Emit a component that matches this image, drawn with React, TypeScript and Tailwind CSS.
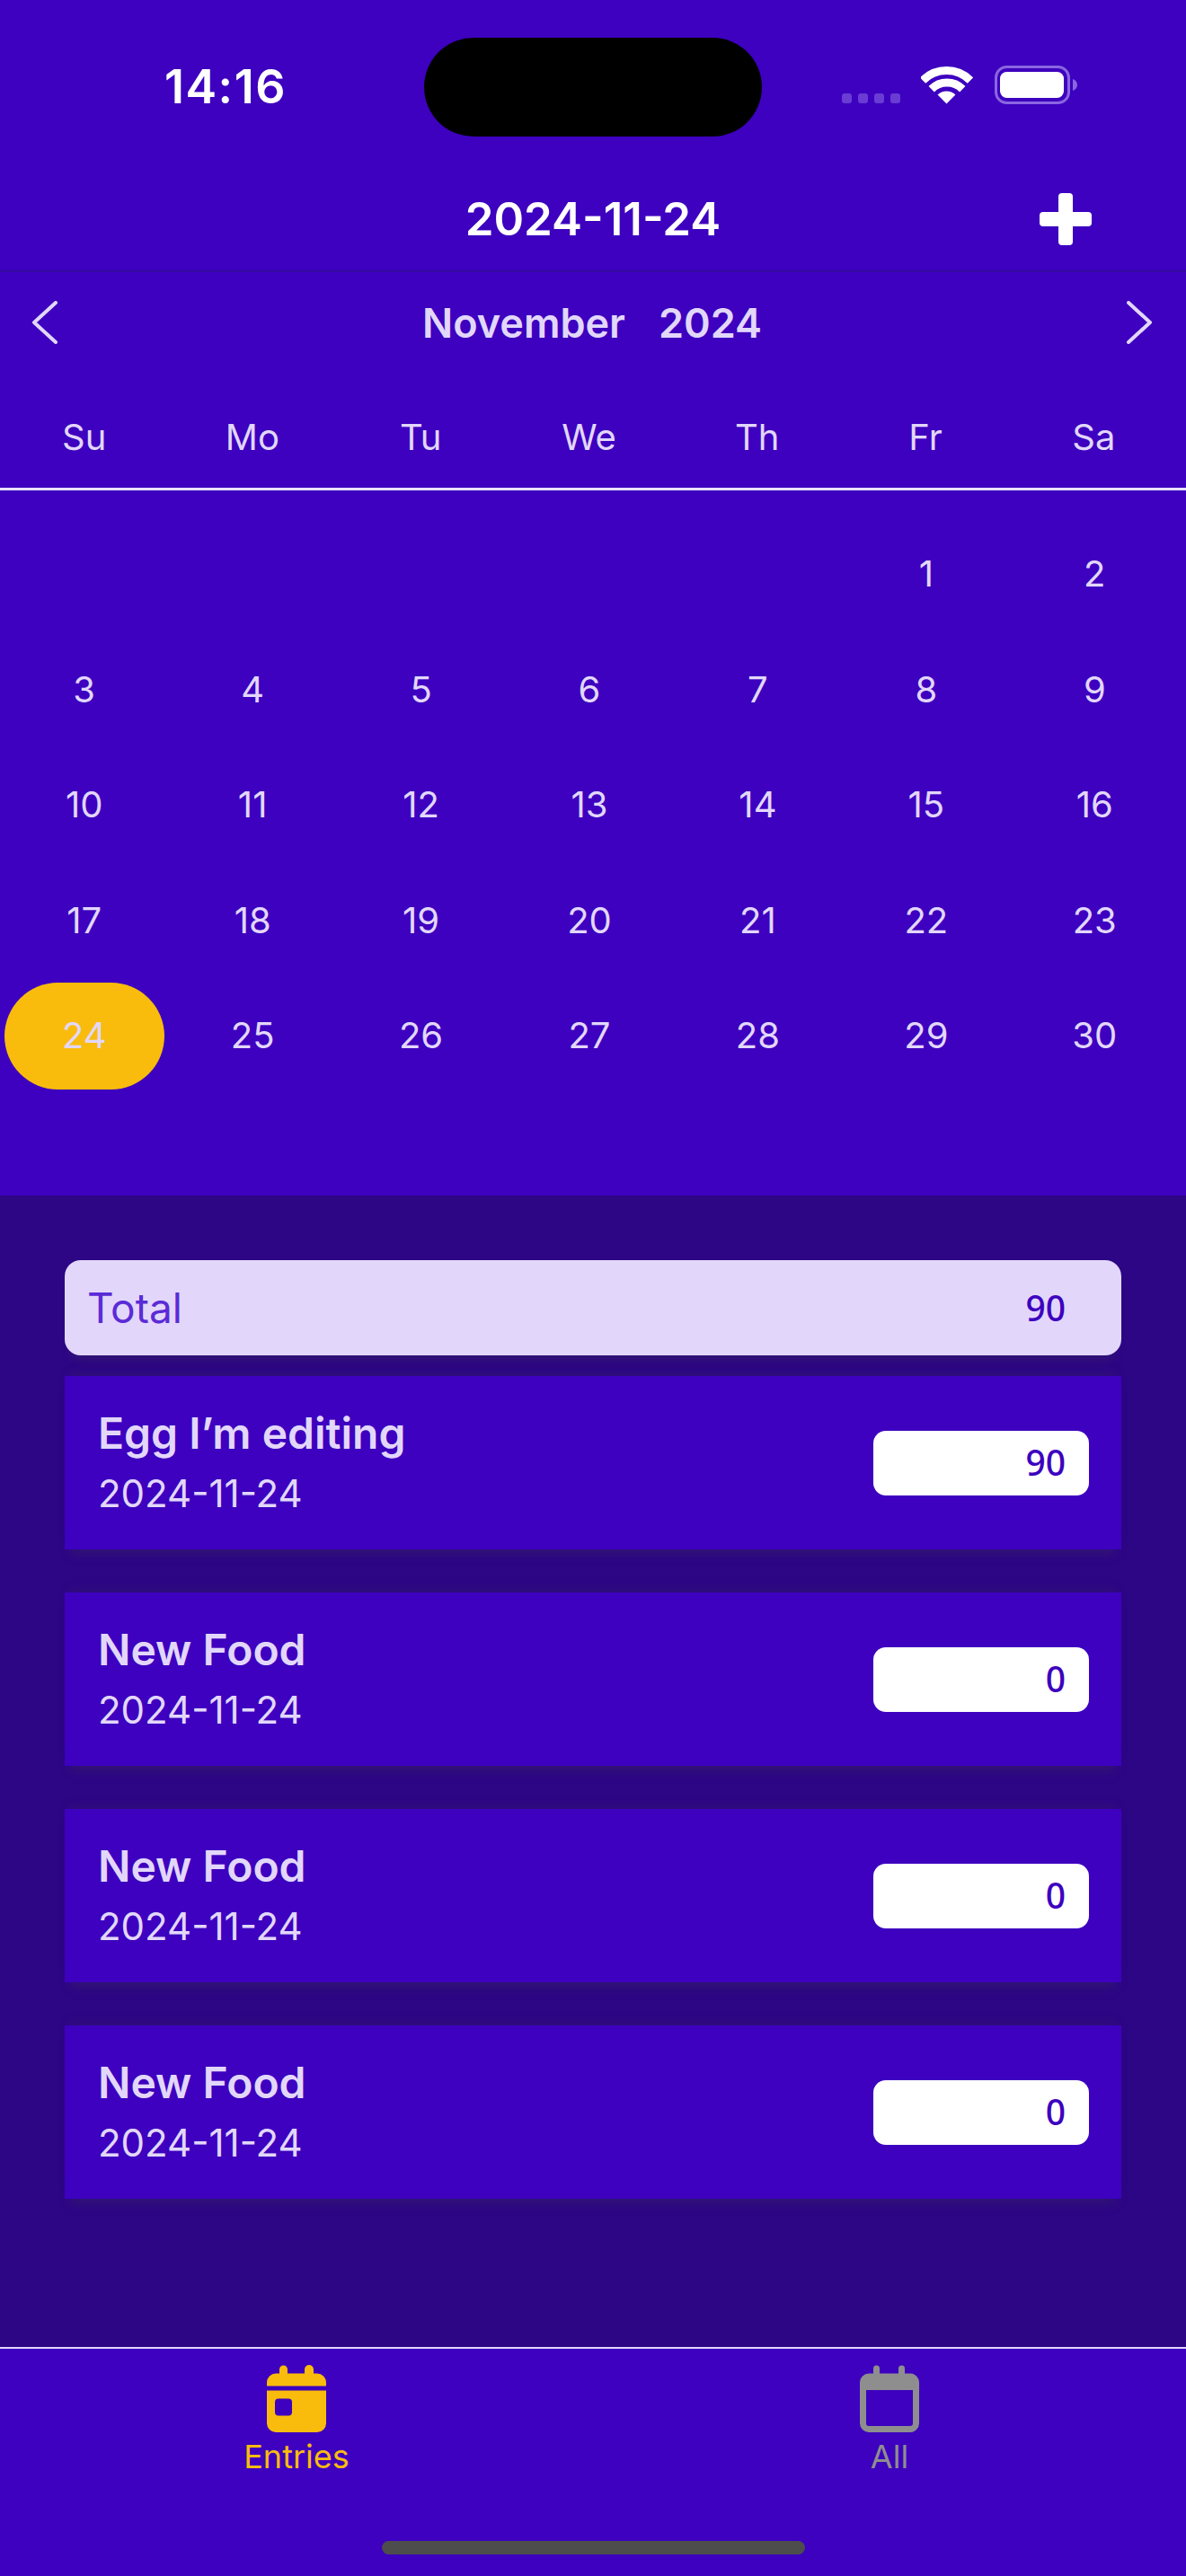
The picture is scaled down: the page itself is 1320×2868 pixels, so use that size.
const weekdays = ["Su", "Mo", "Tu", "We", "Th", "Fr", "Sa"];

const days: (number | null)[] = [
  null, null, null, null, null, 1, 2,
  3, 4, 5, 6, 7, 8, 9,
  10, 11, 12, 13, 14, 15, 16,
  17, 18, 19, 20, 21, 22, 23,
  24, 25, 26, 27, 28, 29, 30,
];

const entries = [
  { name: "Egg I’m editing", date: "2024-11-24", value: "90" },
  { name: "New Food", date: "2024-11-24", value: "0" },
  { name: "New Food", date: "2024-11-24", value: "0" },
  { name: "New Food", date: "2024-11-24", value: "0" },
];

function StatusIcons() {
  return (
    <div className="flex items-end h-[74px] pl-[89px]">
      <div className="flex gap-[7px] pb-px">
        <div className="w-[11px] h-[11px] rounded-[3px] bg-[#6a3cd4]" />
        <div className="w-[11px] h-[11px] rounded-[3px] bg-[#6a3cd4]" />
        <div className="w-[11px] h-[11px] rounded-[3px] bg-[#6a3cd4]" />
        <div className="w-[11px] h-[11px] rounded-[3px] bg-[#6a3cd4]" />
      </div>
      <svg width="58" height="43" viewBox="0 0 58 43" className="ml-[23px]">
        <path d="M2 16.5 A37.5 37.5 0 0 1 55 16.5" fill="none" stroke="#fff" strokeWidth="9" />
        <path d="M11.7 26.2 A24.5 24.5 0 0 1 46.3 26.2" fill="none" stroke="#fff" strokeWidth="9" />
        <path d="M28.5 42.5 L18.6 32.6 A14 14 0 0 1 38.4 32.6 Z" fill="#fff" />
      </svg>
      <svg width="92" height="43" viewBox="0 0 92 43" className="ml-[24px]">
        <rect x="1.5" y="1.5" width="81" height="40" rx="12" fill="none" stroke="#8a66e0" strokeWidth="3" />
        <rect x="6" y="7" width="71" height="29" rx="7.5" fill="#fff" />
        <path d="M87 15 C90 16 92 18.5 92 21.5 C92 24.5 90 27 87 28 Z" fill="#8a66e0" />
      </svg>
    </div>
  );
}

function Header() {
  return (
    <div className="h-[303px] border-b-2 border-[#350a9f] flex flex-col">
      <div className="flex pt-[42px]">
        <div className="w-[472px] pl-[183px] flex items-center h-[110px]">
          <span className="text-[52px] leading-none font-semibold tracking-[1.5px] text-white">14:16</span>
        </div>
        <div className="w-[376px] h-[110px] rounded-full bg-black" />
        <StatusIcons />
      </div>
      <div className="flex-1 relative flex items-center justify-center pt-[34px]">
        <span className="text-[51px] leading-none font-semibold text-white">2024-11-24</span>
        {/* plus button sits over the title row */}
        <svg width="58" height="58" viewBox="0 0 58 58" className="absolute right-[105px] top-[63px]">
          <rect x="21" y="0" width="16" height="58" rx="4" fill="#fff" />
          <rect x="0" y="21" width="58" height="16" rx="4" fill="#fff" />
        </svg>
      </div>
    </div>
  );
}

function Calendar() {
  return (
    <div className="h-[1028px] bg-[#3d01bf]">
      <div className="h-[112px] flex items-center justify-between pl-[35px] pr-[37px] text-[#e2d7fa]">
        <svg width="30" height="48" viewBox="0 0 30 48">
          <path d="M27 2 L3 24 L27 46" fill="none" stroke="#e2d7fa" strokeWidth="4" strokeLinecap="round" strokeLinejoin="round" />
        </svg>
        <div className="flex gap-[37px] text-[45px] leading-none font-semibold">
          <span>November</span>
          <span>2024</span>
        </div>
        <svg width="30" height="48" viewBox="0 0 30 48">
          <path d="M3 2 L27 24 L3 46" fill="none" stroke="#e2d7fa" strokeWidth="4" strokeLinecap="round" strokeLinejoin="round" />
        </svg>
      </div>

      <div className="grid grid-cols-7 pr-[9px] pt-[48px] pb-[32px] border-b-[3px] border-[#e8e0fb]">
        {weekdays.map((d) => (
          <div key={d} className="text-center text-[40px] leading-[48px] text-[#e2d7fa]">
            {d}
          </div>
        ))}
      </div>

      <div className="grid grid-cols-7 auto-rows-[128.5px] pr-[8px] pt-[29px]">
        {days.map((d, i) => (
          <div key={i} className="flex items-center justify-center">
            {d === 24 ? (
              <div className="w-[178px] h-[119px] rounded-full bg-[#f9bc0c] flex items-center justify-center text-[40px] text-[#e2d7fa]">
                {d}
              </div>
            ) : (
              <span className="text-[40px] text-[#e2d7fa]">{d}</span>
            )}
          </div>
        ))}
      </div>
    </div>
  );
}

function EntryList() {
  return (
    <div className="flex-1 bg-[#2d0685] px-[72px] pt-[72px]">
      <div className="h-[106px] rounded-[18px] bg-[#e2d7fa] flex items-center justify-between pl-[25px] pr-[62px] shadow-[0_12px_10px_-7px_rgba(50,25,110,0.8)]">
        <span className="text-[46px] text-[#5b2bd6]">Total</span>
        <span className="text-[39px] font-medium text-[#3d01bf] [font-family:'Noto_Sans',sans-serif]">90</span>
      </div>
      <div className="mt-[23px] flex flex-col gap-[48px]">
        {entries.map((e, i) => (
          <div
            key={i}
            className="h-[193px] bg-[#3d01bf] flex items-center justify-between pl-[37px] pr-[36px] shadow-[0_12px_10px_-7px_rgba(50,25,110,0.8),0_-9px_10px_-7px_rgba(50,25,110,0.6)]"
          >
            <div className="text-[#e2d7fa]">
              <div className="text-[48px] leading-[67px] font-semibold">{e.name}</div>
              <div className="text-[42px] leading-[67px]">{e.date}</div>
            </div>
            <div className="w-[240px] h-[72px] rounded-[14px] bg-white flex items-center justify-end pr-[26px] text-[39px] font-medium text-[#3d01bf] [font-family:'Noto_Sans',sans-serif]">
              {e.value}
            </div>
          </div>
        ))}
      </div>
    </div>
  );
}

function TabBar() {
  return (
    <div className="h-[255px] bg-[#3d01bf] border-t-2 border-[#e2d7fa] flex flex-col">
      <div className="grid grid-cols-2 pt-[18px]">
        <div className="flex flex-col items-center">
          <svg width="66" height="75" viewBox="0 0 66 75">
            <path
              fillRule="evenodd"
              fill="#f9bc0c"
              d="M14 9.5 V5 a4.5 4.5 0 0 1 9 0 V9.5 H42 V5 a5 5 0 0 1 10 0 V9.5 H56 a10 10 0 0 1 10 10 V23.5 H0 V19.5 a10 10 0 0 1 10 -10 Z M0 28.5 H66 V65 a10 10 0 0 1 -10 10 H10 a10 10 0 0 1 -10 -10 Z M13 37.5 a4 4 0 0 0 -4 4 V52.5 a4 4 0 0 0 4 4 H24 a4 4 0 0 0 4 -4 V41.5 a4 4 0 0 0 -4 -4 Z"
            />
          </svg>
          <span className="mt-[5px] text-[36px] leading-[44px] text-[#f9bc0c]">Entries</span>
        </div>
        <div className="flex flex-col items-center">
          <svg width="66" height="75" viewBox="0 0 66 75">
            <path
              fillRule="evenodd"
              fill="#8e8e8e"
              d="M15 9.5 V4 a3.5 3.5 0 0 1 7 0 V9.5 H43 V4 a3.5 3.5 0 0 1 7 0 V9.5 H56 a10 10 0 0 1 10 10 V65 a10 10 0 0 1 -10 10 H10 a10 10 0 0 1 -10 -10 V19.5 a10 10 0 0 1 10 -10 Z M7 28 V65 a3 3 0 0 0 3 3 H56 a3 3 0 0 0 3 -3 V28 Z"
            />
          </svg>
          <span className="mt-[5px] text-[36px] leading-[44px] text-[#8e8e8e]">All</span>
        </div>
      </div>
      <div className="mt-auto mb-[24px] mx-auto w-[471px] h-[15px] rounded-full bg-[#4d4d4d]" />
    </div>
  );
}

export default function App() {
  return (
    <div className="w-[1320px] h-[2868px] flex flex-col bg-[#3d01bf] [font-family:Inter,'Liberation_Sans',sans-serif]">
      <Header />
      <Calendar />
      <EntryList />
      <TabBar />
    </div>
  );
}
